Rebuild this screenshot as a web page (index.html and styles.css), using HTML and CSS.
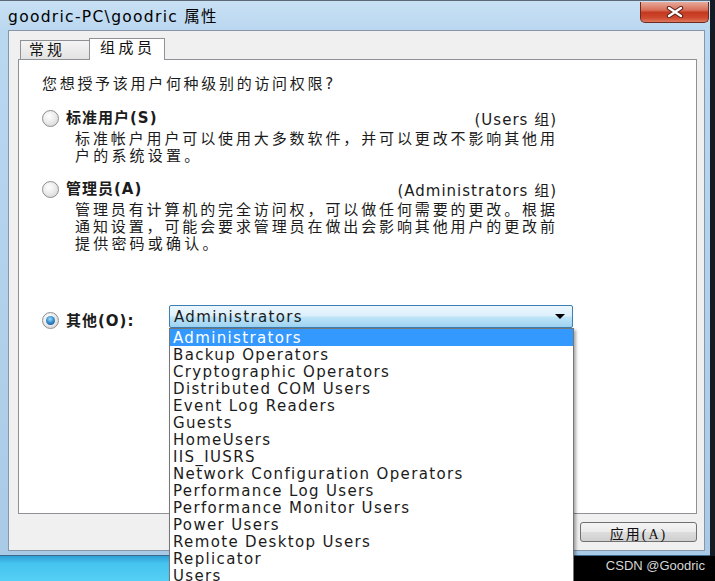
FILE: index.html
```html
<!DOCTYPE html>
<html lang="zh-CN">
<head>
  <meta charset="UTF-8" />
  <title>goodric-PC\goodric 属性</title>
  <link rel="stylesheet" href="styles.css">
</head>
<body>
  <div class="window">
    <div class="titlebar">
      <span class="title">goodric-PC\goodric 属性</span>
      <button class="close" aria-label="关闭">
        <svg width="22" height="12" viewBox="0 0 22 12">
          <path d="M5 2 L17 10 M17 2 L5 10" stroke="#5a1d15" stroke-width="4.4" stroke-linecap="round" fill="none"/>
          <path d="M5 2 L17 10 M17 2 L5 10" stroke="#ffffff" stroke-width="2.4" stroke-linecap="round" fill="none"/>
        </svg>
      </button>
    </div>

    <div class="dialog">
      <div class="tabs">
        <div class="tab">常规</div>
        <div class="tab active">组成员</div>
      </div>

      <div class="panel">
        <p class="question">您想授予该用户何种级别的访问权限?</p>

        <div class="option">
          <div class="option-head">
            <span class="radio"></span>
            <span class="option-label">标准用户(S)</span>
            <span class="group">(Users 组)</span>
          </div>
          <div class="desc">
            <span class="line full">标准帐户用户可以使用大多数软件，并可以更改不影响其他用</span>
            <span class="line">户的系统设置。</span>
          </div>
        </div>

        <div class="option">
          <div class="option-head">
            <span class="radio"></span>
            <span class="option-label">管理员(A)</span>
            <span class="group">(Administrators 组)</span>
          </div>
          <div class="desc">
            <span class="line full">管理员有计算机的完全访问权，可以做任何需要的更改。根据</span>
            <span class="line full">通知设置，可能会要求管理员在做出会影响其他用户的更改前</span>
            <span class="line">提供密码或确认。</span>
          </div>
        </div>

        <div class="option other">
          <span class="radio checked"></span>
          <span class="option-label wide">其他(O):</span>
          <div class="combo">
            <div class="combo-box">
              <span>Administrators</span>
              <span class="arrow"></span>
            </div>
            <ul class="combo-list">
              <li class="selected">Administrators</li>
              <li>Backup Operators</li>
              <li>Cryptographic Operators</li>
              <li>Distributed COM Users</li>
              <li>Event Log Readers</li>
              <li>Guests</li>
              <li>HomeUsers</li>
              <li>IIS_IUSRS</li>
              <li>Network Configuration Operators</li>
              <li>Performance Log Users</li>
              <li>Performance Monitor Users</li>
              <li>Power Users</li>
              <li>Remote Desktop Users</li>
              <li>Replicator</li>
              <li>Users</li>
            </ul>
          </div>
        </div>
      </div>

      <div class="actions">
        <button class="btn">应用(A)</button>
      </div>
    </div>
  </div>

  <div class="band">
    <div class="desk"></div>
    <div class="mark">CSDN @Goodric</div>
  </div>
</body>
</html>
```

FILE: styles.css
```css
* {
  box-sizing: border-box;
}
html, body {
  margin: 0;
  padding: 0;
  height: 581px;
  overflow: hidden;
}
body {
  width: 715px;
  background: #151b24;
  font-family: "DejaVu Sans", "Noto Sans CJK SC", sans-serif;
  font-size: 15px;
  letter-spacing: 1px;
  color: #1b1b1b;
}

.window {
  width: 710px;
  background: linear-gradient(to bottom, #c8e0f4 0, #bad7f0 30px, #a9cae7 100%);
  border-top: 1px solid #5b6876;
  border-bottom: 1px solid #3b6a8e;
  padding-bottom: 4px;
}

.titlebar {
  display: flex;
  align-items: flex-start;
  height: 29px;
  padding-left: 8px;
}

.title {
  margin-top: 6px;
  line-height: 20px;
  font-size: 15.5px;
  letter-spacing: 1.3px;
  color: #000;
}

.close {
  display: flex;
  align-items: center;
  justify-content: center;
  margin: 1px 1px 0 auto;
  width: 69px;
  height: 21px;
  padding: 0;
  border: 1px solid #6f2a20;
  border-top: none;
  border-radius: 0 0 5px 5px;
  background: linear-gradient(to bottom, #e8aa9b 0, #d8705b 40%, #c4391f 52%, #cf4a30 80%, #de7a5f 100%);
}

.dialog {
  height: 521px;
  margin: 0 5px 0 8px;
  padding: 7px 7px 0 9px;
  background: #f0f0f0;
  border: 1px solid #8796a8;
}

.tabs {
  display: flex;
  align-items: flex-end;
  height: 21px;
  margin-left: 2px;
}

.tab {
  width: 70px;
  height: 19px;
  padding-left: 8px;
  border: 1px solid #8e9296;
  border-bottom: none;
  background: linear-gradient(to bottom, #f4f4f4, #e3e3e3);
  line-height: 18px;
  letter-spacing: 3px;
  color: #111;
}

.tab.active {
  position: relative;
  z-index: 1;
  width: 76px;
  height: 22px;
  margin-left: -1px;
  margin-bottom: -1px;
  padding-left: 10px;
  background: #fff;
  letter-spacing: 3.5px;
}

.panel {
  height: 455px;
  padding: 16px 139px 0 23px;
  background: #fff;
  border: 1px solid #8e9296;
}

.question {
  margin: 0;
  line-height: 17px;
  letter-spacing: 2.7px;
}

.option {
  margin-top: 16px;
}
.option + .option {
  margin-top: 15px;
}

.option-head {
  display: flex;
  align-items: center;
  height: 18px;
}

.radio {
  flex: none;
  position: relative;
  width: 17px;
  height: 17px;
  border-radius: 50%;
  border: 1px solid #8c8e90;
  background: radial-gradient(circle at 40% 35%, #ffffff 0, #ececec 45%, #cfcfcf 100%);
}

.radio.checked::after {
  content: "";
  position: absolute;
  left: 3px;
  top: 3px;
  width: 9px;
  height: 9px;
  border-radius: 50%;
  background: radial-gradient(circle at 45% 35%, #9fe0ff 0, #3a8fd0 45%, #0f3f7a 100%);
}

.option-label {
  margin-left: 7px;
  font-weight: bold;
  line-height: 18px;
}

.group {
  margin-left: auto;
}

.desc {
  margin: 4px 0 0 33px;
  line-height: 17px;
}

.line {
  display: block;
  letter-spacing: 3.2px;
}

.line.full {
  letter-spacing: 2px;
  text-align: justify;
  text-align-last: justify;
}

.option.other {
  display: flex;
  align-items: flex-start;
  margin-top: 52px;
}

.option.other .radio {
  margin-top: 7px;
}

.option-label.wide {
  width: 103px;
  flex: none;
  margin-top: 7px;
}

.combo {
  position: relative;
  flex: none;
  width: 404px;
  letter-spacing: 1.35px;
}

.combo-box {
  display: flex;
  align-items: center;
  justify-content: space-between;
  height: 23px;
  padding: 0 7px 0 4px;
  border: 1px solid #3c7fb1;
  border-radius: 2px;
  background: linear-gradient(to bottom, #edf7fd 0, #dcf0fc 45%, #bde4f8 55%, #9dd2f1 100%);
  line-height: 20px;
}

.arrow {
  width: 0;
  height: 0;
  border-left: 5px solid transparent;
  border-right: 5px solid transparent;
  border-top: 5px solid #000;
}

.combo-list {
  position: absolute;
  top: 23px;
  left: 0;
  z-index: 5;
  width: 405px;
  margin: 0;
  padding: 0;
  list-style: none;
  background: #fff;
  border: 1px solid #767676;
  box-shadow: 2px 2px 3px rgba(0, 0, 0, 0.35);
}

.combo-list li {
  height: 17px;
  padding: 1px 0 0 3px;
  line-height: 17px;
  white-space: nowrap;
}

.combo-list li.selected {
  background: #3399ff;
  color: #fff;
}

.actions {
  display: flex;
  justify-content: flex-end;
  margin-top: 8px;
}

.btn {
  width: 117px;
  height: 20px;
  padding: 0;
  border: 1px solid #707070;
  border-radius: 3px;
  background: linear-gradient(to bottom, #f4f4f4 0, #ebebeb 50%, #dddddd 51%, #cfcfcf 100%);
  font-family: "Liberation Serif", "Noto Sans CJK SC", serif;
  font-size: 14px;
  letter-spacing: 2px;
  color: #111;
}

.band {
  display: flex;
  height: 25px;
}

.desk {
  width: 169px;
  background: linear-gradient(to bottom, #2e9fd4 0, #45c4ef 30%, #55cff5 100%);
}

.mark {
  flex: 1;
  padding: 1px 10px 0 0;
  background: #000;
  color: #d6d6d6;
  font-family: "Liberation Sans", sans-serif;
  font-size: 13px;
  letter-spacing: 0;
  line-height: 17px;
  text-align: right;
}
```
